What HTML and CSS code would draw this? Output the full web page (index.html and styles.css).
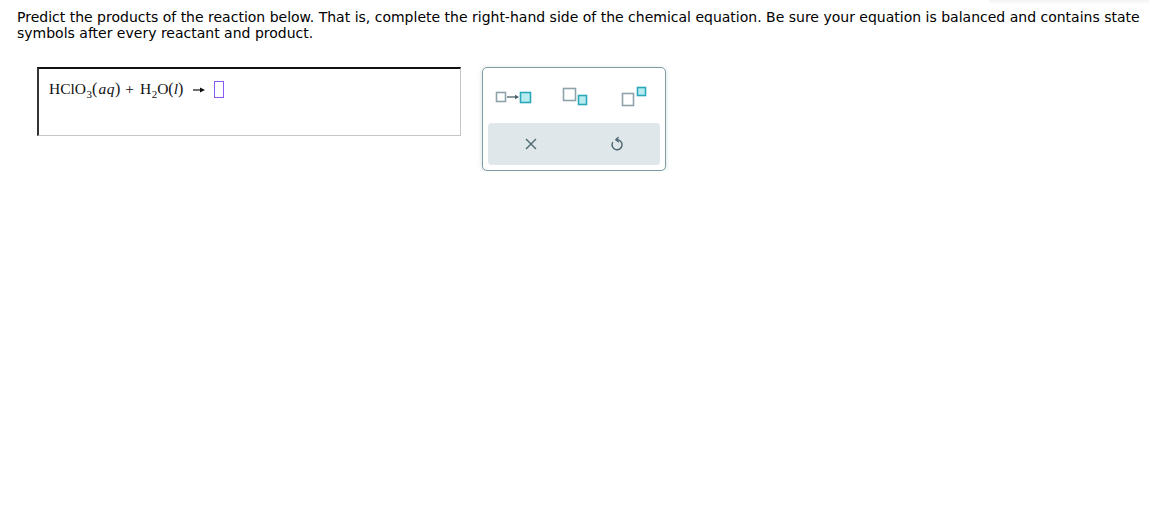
FILE: index.html
```html
<!DOCTYPE html>
<html>
<head>
<meta charset="utf-8">
<link rel="stylesheet" href="styles.css">
</head>
<body>
<div class="topshade"></div>
<p class="prompt">Predict the products of the reaction below. That is, complete the right-hand side of the chemical equation. Be sure your equation is balanced and contains state symbols after every reactant and product.</p>
<div class="work">
  <div class="eqbox">
    <span class="eq"><span class="sp">HClO</span><sub>3</sub><span class="paren">(</span><i class="st">aq</i><span class="paren">)</span><span class="op">+</span><span class="sp">H</span><sub>2</sub>O<span class="paren">(</span><i>l</i><span class="paren">)</span><svg class="arrow" width="12" height="8" viewBox="0 0 12 8"><line x1="0" y1="4" x2="8" y2="4" stroke="#111" stroke-width="1.2"/><path d="M7 1.6 L12 4 L7 6.4 Z" fill="#111"/></svg><span class="slot"></span></span>
  </div>
  <div class="palette">
    <div class="iconrow">
      <button class="tool" aria-label="reaction arrow">
        <svg width="40" height="16" viewBox="0 0 40 16">
          <rect x="1.5" y="3.5" width="9" height="9" fill="#fff" stroke="#8fa4aa" stroke-width="1.6"/>
          <line x1="12" y1="8" x2="22" y2="8" stroke="#4a6068" stroke-width="1.3"/>
          <path d="M20 5.8 L24 8 L20 10.2 Z" fill="#4a6068"/>
          <rect x="25.5" y="3.5" width="10" height="10" fill="#b9ecf1" stroke="#2aa9b8" stroke-width="1.6"/>
        </svg>
      </button>
      <button class="tool" aria-label="subscript">
        <svg width="30" height="20" viewBox="0 0 30 20">
          <rect x="1.5" y="1.5" width="12" height="12" fill="#fff" stroke="#8fa4aa" stroke-width="1.6"/>
          <rect x="16.5" y="8.5" width="8" height="9" fill="#b9ecf1" stroke="#2aa9b8" stroke-width="1.6"/>
        </svg>
      </button>
      <button class="tool" aria-label="superscript">
        <svg width="30" height="22" viewBox="0 0 30 22">
          <rect x="1.5" y="7.5" width="11" height="12" fill="#fff" stroke="#8fa4aa" stroke-width="1.6"/>
          <rect x="16.5" y="1.5" width="8" height="8" fill="#b9ecf1" stroke="#2aa9b8" stroke-width="1.6"/>
        </svg>
      </button>
    </div>
    <div class="actions">
      <button class="tool" aria-label="clear">
        <svg width="14" height="14" viewBox="0 0 14 14">
          <path d="M2 2 L12 12 M12 2 L2 12" stroke="#4d6770" stroke-width="1.4" fill="none"/>
        </svg>
      </button>
      <button class="tool" aria-label="undo">
        <svg width="16" height="16" viewBox="0 0 16 16">
          <path d="M7.5 3.8 A5 5 0 1 1 3.6 6.5" stroke="#4d6770" stroke-width="1.4" fill="none" stroke-linecap="round"/>
          <path d="M9.2 1.4 L6.8 3.8 L9.4 5.8" stroke="#4d6770" stroke-width="1.4" fill="none" stroke-linecap="round" stroke-linejoin="round"/>
        </svg>
      </button>
    </div>
  </div>
</div>
</body>
</html>
```

FILE: styles.css
```css
html, body {
  margin: 0;
  padding: 0;
  background: #fff;
}
body {
  position: relative;
  font-family: "DejaVu Sans", Verdana, sans-serif;
  color: #000;
}
.topshade {
  position: absolute;
  top: 0;
  right: 0;
  width: 160px;
  height: 4px;
  background: linear-gradient(to bottom, #f1f1f1, #fff);
}
.prompt {
  margin: 0;
  padding: 9px 0 0 17px;
  font-size: 14px;
  line-height: 16px;
  width: 1130px;
}
.work {
  display: flex;
  align-items: flex-start;
  gap: 21px;
  padding: 26px 0 0 37px;
}
.eqbox {
  box-sizing: border-box;
  width: 424px;
  height: 69px;
  border-top: 2px solid #111;
  border-left: 2px solid #333;
  border-right: 1px solid #c6c6c6;
  border-bottom: 1px solid #c6c6c6;
  padding: 0 0 0 10px;
}
.eq {
  display: flex;
  align-items: baseline;
  margin-top: 10px;
  font-family: "Liberation Serif", "Times New Roman", serif;
  font-size: 15.5px;
  line-height: 20px;
  color: #111;
  white-space: nowrap;
}
.eq sub {
  font-size: 11px;
  position: relative;
  top: 4px;
  line-height: 0;
  margin: 0 0 0 0.5px;
}
.eq .paren {
  font-size: 16px;
}
.eq i.st {
  letter-spacing: 0.5px;
  margin-left: 1px;
}
.eq .op {
  margin: 0 6px 0 5px;
}
.arrow {
  margin: 0 9px 0 10px;
  align-self: center;
  position: relative;
  top: 1px;
}
.slot {
  display: inline-block;
  width: 8px;
  height: 15px;
  border: 1.5px solid #8a5cf5;
  align-self: center;
}
.palette {
  width: 184px;
  height: 104px;
  box-sizing: border-box;
  border: 1.5px solid #7d9ea6;
  border-radius: 5px;
  box-shadow: 0 1px 4px rgba(80, 110, 120, 0.25);
  padding: 5px;
  display: flex;
  flex-direction: column;
  background: #fff;
}
.iconrow {
  height: 50px;
  display: grid;
  grid-template-columns: 54px 70px 1fr;
  align-items: center;
}
.tool {
  border: 0;
  background: transparent;
  padding: 0;
  display: flex;
  align-items: center;
  justify-content: center;
}
.iconrow .tool:nth-child(1) { padding-left: 0; padding-bottom: 2px; }
.iconrow .tool:nth-child(2) { padding-left: 0; padding-bottom: 2px; }
.iconrow .tool:nth-child(3) { padding-left: 0; padding-bottom: 2px; }
.actions {
  flex: 1;
  background: #dfe7ea;
  border-radius: 4px;
  display: grid;
  grid-template-columns: 1fr 1fr;
  align-items: center;
}
```
